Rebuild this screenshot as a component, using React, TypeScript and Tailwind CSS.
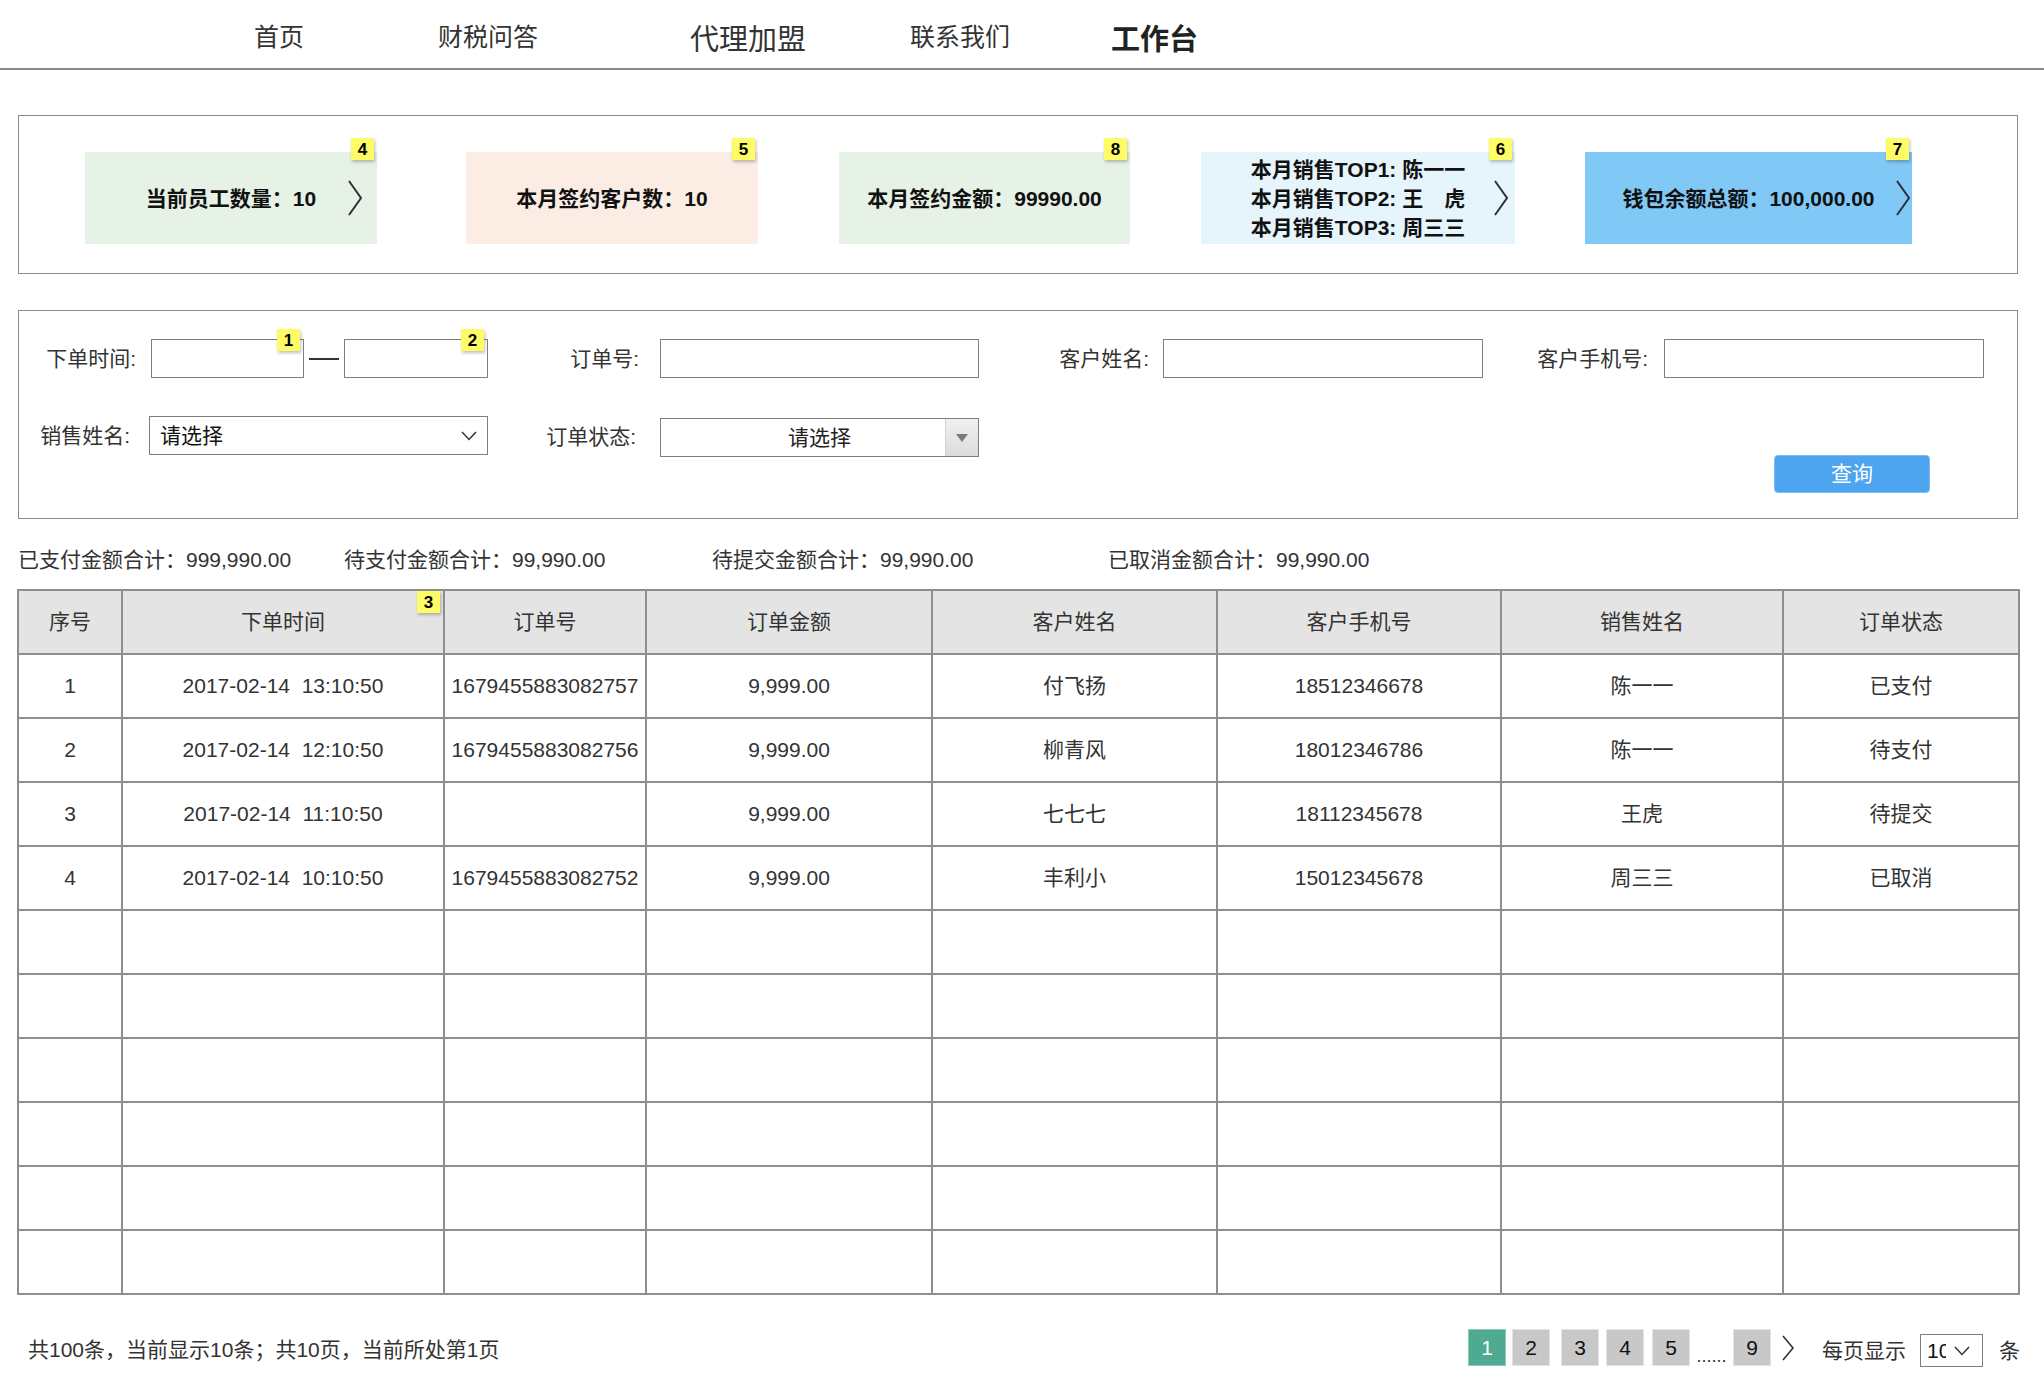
import React from "react";

// ── small pieces ──

const Chevron = ({ className = "" }: { className?: string }) => (
  <svg width="16" height="38" viewBox="0 0 16 38" fill="none" className={className}>
    <polyline points="2,2 14,19 2,36" stroke="#2f2f3a" strokeWidth="2" fill="none" strokeLinejoin="miter" />
  </svg>
);

const SmallDown = () => (
  <svg width="16" height="10" viewBox="0 0 16 10" fill="none">
    <polyline points="1,1 8,8.5 15,1" stroke="#333" strokeWidth="1.5" fill="none" />
  </svg>
);

function Badge({ n, className = "" }: { n: number; className?: string }) {
  return (
    <span
      className={
        "absolute flex items-center justify-center w-[23px] h-[22px] bg-[#fdfb66] text-[17px] font-bold text-black leading-none shadow-[1px_2px_3px_rgba(0,0,0,0.25)] " +
        className
      }
    >
      {n}
    </span>
  );
}

interface Card {
  w: string;
  ml: string;
  bg: string;
  badge: number;
  chevron?: string;
  lines: string[];
}

const CARDS: Card[] = [
  { w: "w-[292px]", ml: "ml-[66px]", bg: "bg-[#e6f2e5]", badge: 4, chevron: "right-[14px]", lines: ["当前员工数量：10"] },
  { w: "w-[292px]", ml: "ml-[89px]", bg: "bg-[#fbede4]", badge: 5, lines: ["本月签约客户数：10"] },
  { w: "w-[291px]", ml: "ml-[81px]", bg: "bg-[#e6f2e5]", badge: 8, lines: ["本月签约金额：99990.00"] },
  {
    w: "w-[314px]",
    ml: "ml-[71px]",
    bg: "bg-[#e6f4fc]",
    badge: 6,
    chevron: "right-[6px]",
    lines: ["本月销售TOP1: 陈一一", "本月销售TOP2: 王\u3000虎", "本月销售TOP3: 周三三"],
  },
  { w: "w-[327px]", ml: "ml-[70px]", bg: "bg-[#80c8f6]", badge: 7, chevron: "right-[1px]", lines: ["钱包余额总额：100,000.00"] },
];

const COLS = [104, 322, 202, 286, 285, 284, 282, 236];
const HEAD = ["序号", "下单时间", "订单号", "订单金额", "客户姓名", "客户手机号", "销售姓名", "订单状态"];
const ROWS: string[][] = [
  ["1", "2017-02-14\u00a0\u00a013:10:50", "1679455883082757", "9,999.00", "付飞扬", "18512346678", "陈一一", "已支付"],
  ["2", "2017-02-14\u00a0\u00a012:10:50", "1679455883082756", "9,999.00", "柳青风", "18012346786", "陈一一", "待支付"],
  ["3", "2017-02-14\u00a0\u00a011:10:50", "", "9,999.00", "七七七", "18112345678", "王虎", "待提交"],
  ["4", "2017-02-14\u00a0\u00a010:10:50", "1679455883082752", "9,999.00", "丰利小", "15012345678", "周三三", "已取消"],
  ...Array.from({ length: 6 }, () => Array(8).fill("")),
];

function Label({ text, w, pr }: { text: string; w: string; pr: string }) {
  return <div className={`${w} ${pr} shrink-0 text-right text-[21px] text-[#333]`}>{text}</div>;
}

function PageBox({ n, active }: { n: string; active?: boolean }) {
  return (
    <div
      className={
        "w-[38px] h-[37px] flex items-center justify-center text-[21px] border " +
        (active ? "bg-[#4eaa90] border-[#8fcab9] text-white" : "bg-[#c8c8c8] border-[#e2e2e2] text-[#111]")
      }
    >
      {n}
    </div>
  );
}

export default function App() {
  return (
    <div className="w-[2044px] min-h-[1390px] bg-white font-['Liberation_Sans','Noto_Sans_CJK_SC',sans-serif] text-[#333]">
      {/* ── Top nav ── */}
      <nav className="h-[70px] border-b-2 border-[#8a8a8a] flex items-center pt-[8px]">
        <span className="ml-[254px] text-[25px] text-[#333]">首页</span>
        <span className="ml-[134px] text-[25px] text-[#333]">财税问答</span>
        <span className="ml-[152px] text-[29px] text-[#333] mt-[6px]">代理加盟</span>
        <span className="ml-[104px] text-[25px] text-[#333]">联系我们</span>
        <span className="ml-[101px] text-[29px] font-bold text-[#222] mt-[6px]">工作台</span>
      </nav>

      {/* ── Stat cards ── */}
      <section className="mt-[45px] ml-[18px] w-[2000px] h-[159px] border border-[#8a8a8a] flex items-start pt-[36px]">
        {CARDS.map((c) => (
          <div key={c.badge} className={`relative ${c.w} ${c.ml} h-[92px] ${c.bg} flex flex-col items-center justify-center shrink-0`}>
            {c.lines.map((l) => (
              <div key={l} className="text-[21px] font-bold text-[#111] leading-[29px] whitespace-pre">
                {l}
              </div>
            ))}
            <Badge n={c.badge} className="-top-[14px] right-[3px]" />
            {c.chevron && <Chevron className={`absolute top-[27px] ${c.chevron}`} />}
          </div>
        ))}
      </section>

      {/* ── Filter panel ── */}
      <section className="mt-[36px] ml-[18px] w-[2000px] h-[209px] border border-[#8a8a8a] pt-[28px] pl-[1px]">
        <div className="flex items-center h-[39px]">
          <Label text="下单时间:" w="w-[131px]" pr="pr-[15px]" />
          <div className="relative w-[153px] h-[39px] border border-[#7f7f7f] shrink-0">
            <Badge n={1} className="-top-[11px] right-[3px]" />
          </div>
          <div className="w-[40px] flex items-center justify-center shrink-0">
            <div className="w-[30px] h-[2px] bg-[#333]" />
          </div>
          <div className="relative w-[144px] h-[39px] border border-[#7f7f7f] shrink-0">
            <Badge n={2} className="-top-[11px] right-[3px]" />
          </div>
          <Label text="订单号:" w="w-[172px]" pr="pr-[21px]" />
          <div className="w-[319px] h-[39px] border border-[#7f7f7f] shrink-0" />
          <Label text="客户姓名:" w="w-[184px]" pr="pr-[14px]" />
          <div className="w-[320px] h-[39px] border border-[#7f7f7f] shrink-0" />
          <Label text="客户手机号:" w="w-[181px]" pr="pr-[16px]" />
          <div className="w-[320px] h-[39px] border border-[#7f7f7f] shrink-0" />
        </div>

        <div className="flex items-start h-[39px] mt-[38px]">
          <div className="h-[39px] flex items-center">
            <Label text="销售姓名:" w="w-[129px]" pr="pr-[19px]" />
          </div>
          <div className="w-[339px] h-[39px] border border-[#7f7f7f] flex items-center justify-between pl-[10px] pr-[10px] shrink-0">
            <span className="text-[21px] text-[#111]">请选择</span>
            <SmallDown />
          </div>
          <div className="h-[41px] flex items-center">
            <Label text="订单状态:" w="w-[172px]" pr="pr-[24px]" />
          </div>
          <div className="mt-[2px] w-[319px] h-[39px] border border-[#7f7f7f] flex shrink-0">
            <div className="flex-1 flex items-center justify-center pl-[33px] text-[21px] text-[#222]">请选择</div>
            <div className="w-[33px] h-full bg-gradient-to-b from-[#f0f0f0] to-[#dcdcdc] border-l border-[#d0d0d0] flex items-center justify-center">
              <svg width="12" height="8" viewBox="0 0 12 8">
                <polygon points="0,0 12,0 6,8" fill="#7a7a7a" />
              </svg>
            </div>
          </div>
        </div>

        <div className="flex">
          <button className="ml-[1754px] w-[156px] h-[38px] rounded-[4px] bg-[#4ea5ef] border border-[#7dbdf3] text-white text-[21px] flex items-center justify-center">
            查询
          </button>
        </div>
      </section>

      {/* ── Totals ── */}
      <div className="h-[70px] flex items-center pt-[12px] pl-[18px] text-[21px] text-[#333]">
        <span className="w-[326px] shrink-0">已支付金额合计：999,990.00</span>
        <span className="w-[368px] shrink-0">待支付金额合计：99,990.00</span>
        <span className="w-[396px] shrink-0">待提交金额合计：99,990.00</span>
        <span>已取消金额合计：99,990.00</span>
      </div>

      {/* ── Orders table ── */}
      <table className="ml-[17px] w-[2001px] table-fixed border-collapse border-2 border-[#8e8e8e] text-[21px] text-[#333]">
        <colgroup>
          {COLS.map((w, i) => (
            <col key={i} style={{ width: w }} />
          ))}
        </colgroup>
        <thead>
          <tr className="h-[64px] bg-[#e4e4e4]">
            {HEAD.map((h, i) => (
              <th key={h} className="relative font-normal border-2 border-[#8e8e8e] text-center">
                {h}
                {i === 1 && <Badge n={3} className="top-0 right-[3px]" />}
              </th>
            ))}
          </tr>
        </thead>
        <tbody>
          {ROWS.map((r, ri) => (
            <tr key={ri} className="h-[64px]">
              {r.map((c, ci) => (
                <td key={ci} className="border-2 border-[#8e8e8e] text-center whitespace-nowrap">
                  {c}
                </td>
              ))}
            </tr>
          ))}
        </tbody>
      </table>

      {/* ── Footer / pagination ── */}
      <div className="mt-[34px] h-[37px] flex items-center justify-between pl-[28px] pr-[24px]">
        <span className="text-[21px] text-[#333] mt-[5px]">共100条，当前显示10条；共10页，当前所处第1页</span>
        <div className="flex items-center">
          <PageBox n="1" active />
          <div className="ml-[6px]"><PageBox n="2" /></div>
          <div className="ml-[11px]"><PageBox n="3" /></div>
          <div className="ml-[7px]"><PageBox n="4" /></div>
          <div className="ml-[8px]"><PageBox n="5" /></div>
          <span className="w-[43px] text-center text-[18px] text-[#333] self-end leading-[22px]">......</span>
          <PageBox n="9" />
          <svg width="14" height="26" viewBox="0 0 14 26" className="ml-[10px]">
            <polyline points="2,1 12,13 2,25" stroke="#333" strokeWidth="1.6" fill="none" />
          </svg>
          <span className="ml-[27px] text-[21px] text-[#333] mt-[6px]">每页显示</span>
          <div className="ml-[14px] mt-[6px] w-[63px] h-[33px] border border-[#7f7f7f] flex items-center pl-[6px]">
            <span className="w-[19px] overflow-hidden text-[21px] text-[#111] leading-none">10</span>
            <span className="ml-[8px]"><SmallDown /></span>
          </div>
          <span className="ml-[16px] text-[21px] text-[#333] mt-[6px]">条</span>
        </div>
      </div>
    </div>
  );
}
